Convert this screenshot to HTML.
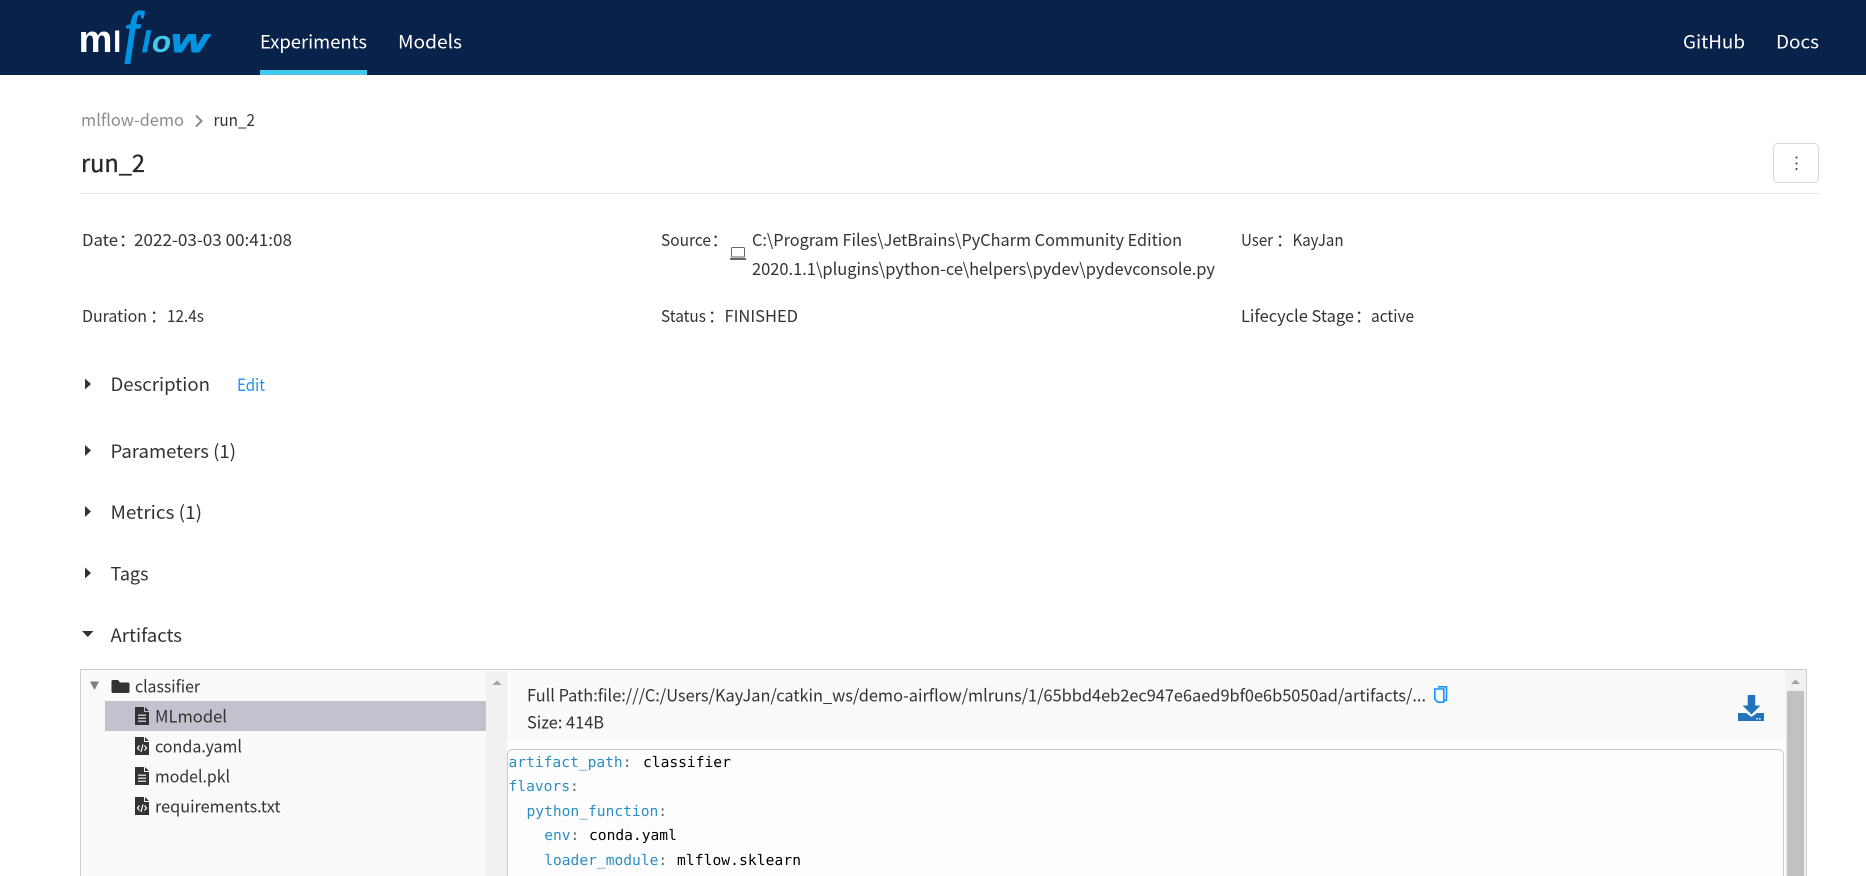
<!DOCTYPE html>
<html lang="en"><head><meta charset="utf-8"><title>run_2 - MLflow Run</title>
<style>
html,body{margin:0;padding:0;background:#fff;width:1866px;height:876px;overflow:hidden}
svg{display:block;position:absolute;left:0;top:0}
text{font-family:"Noto Sans CJK SC","Liberation Sans",sans-serif;fill:#333;white-space:pre}
.nav{font-size:18.5px;fill:#fff}
.m{font-size:16.6px}
.h{font-size:18.2px;fill:#333}
.t{font-size:16.8px;fill:#333}
.c{font-family:"DejaVu Sans Mono","Liberation Mono",monospace;font-size:14.6px;fill:#000;text-rendering:geometricPrecision}
.k{fill:#2b8fc4}.p{fill:#5a6b75}
.lg{font-family:"Liberation Sans",sans-serif}
</style></head><body>
<svg width="1866" height="876" viewBox="0 0 1866 876" xmlns="http://www.w3.org/2000/svg">
<!-- header -->
<rect width="1866" height="75" fill="#082249"/>
<rect x="260" y="70" width="107" height="5" fill="#43c9ed"/>
<text class="lg" x="78.500" y="52" font-size="38" font-weight="bold" style="fill:#fff" textLength="34" lengthAdjust="spacingAndGlyphs">m</text>
<text class="lg" x="113" y="52" font-size="30" font-weight="bold" style="fill:#fff">l</text>
<text x="125" y="51" font-size="56" style="font-family:'Liberation Serif',serif;font-style:italic;fill:#0194e2;stroke:#0194e2;stroke-width:2.200" textLength="13.400" lengthAdjust="spacingAndGlyphs">f</text>
<text class="lg" x="142" y="52" font-size="30" font-weight="bold" style="font-style:italic;fill:#0194e2;stroke:#0194e2;stroke-width:.8">l</text>
<text class="lg" x="152" y="52" font-size="31" font-weight="bold" style="font-style:italic;fill:#43c9ed" textLength="19" lengthAdjust="spacingAndGlyphs">o</text>
<text class="lg" x="171" y="52" font-size="33" font-weight="bold" style="font-style:italic;fill:#0194e2;stroke:#0194e2;stroke-width:.9" textLength="37" lengthAdjust="spacingAndGlyphs">w</text>
<text class="nav" x="260" y="48.500" textLength="107" lengthAdjust="spacingAndGlyphs">Experiments</text>
<text class="nav" x="398" y="48.500" textLength="64" lengthAdjust="spacingAndGlyphs">Models</text>
<text class="nav" x="1683" y="48.500" textLength="62" lengthAdjust="spacingAndGlyphs">GitHub</text>
<text class="nav" x="1776" y="48.500" textLength="43" lengthAdjust="spacingAndGlyphs">Docs</text>
<!-- breadcrumb -->
<text class="m" x="81" y="126" style="fill:#8c8c8c" textLength="103" lengthAdjust="spacingAndGlyphs">mlflow-demo</text>
<path d="M196 115.500l5.500 5.500-5.500 5.500" fill="none" stroke="#8c8c8c" stroke-width="2"/>
<text class="m" x="213.500" y="126" style="fill:#333" textLength="41.500" lengthAdjust="spacingAndGlyphs">run_2</text>
<text x="81" y="172" font-size="23.500" style="fill:#262626;stroke:#262626;stroke-width:.35" textLength="64" lengthAdjust="spacingAndGlyphs">run_2</text>
<rect x="1773.500" y="143.500" width="45" height="39" rx="4" fill="#fff" stroke="#d9d9d9"/>
<circle cx="1796.500" cy="157.500" r="1" fill="#333"/><circle cx="1796.500" cy="163.500" r="1" fill="#333"/><circle cx="1796.500" cy="169" r="1" fill="#333"/>
<rect x="80" y="193" width="1739" height="1" fill="#e4e4e4"/>
<!-- meta -->
<text class="m" x="82" y="246" textLength="36" lengthAdjust="spacingAndGlyphs">Date</text><text class="m" x="119" y="246">：</text>
<text class="m" x="134" y="246" textLength="158" lengthAdjust="spacingAndGlyphs">2022-03-03 00:41:08</text>
<text class="m" x="661" y="246" textLength="50" lengthAdjust="spacingAndGlyphs">Source</text><text class="m" x="711.500" y="246">：</text>
<rect x="731.500" y="247.500" width="13" height="9.500" rx="1" fill="none" stroke="#666"/><rect x="730" y="258" width="16" height="2" fill="#666"/>
<text class="m" x="752" y="246" textLength="430" lengthAdjust="spacingAndGlyphs">C:\Program Files\JetBrains\PyCharm Community Edition</text>
<text class="m" x="752" y="275" textLength="463" lengthAdjust="spacingAndGlyphs">2020.1.1\plugins\python-ce\helpers\pydev\pydevconsole.py</text>
<text class="m" x="1241" y="246" textLength="32" lengthAdjust="spacingAndGlyphs">User</text><text class="m" x="1276" y="246">：</text>
<text class="m" x="1292.500" y="246" textLength="51" lengthAdjust="spacingAndGlyphs">KayJan</text>
<text class="m" x="82" y="322" textLength="65" lengthAdjust="spacingAndGlyphs">Duration</text><text class="m" x="150" y="322">：</text>
<text class="m" x="167" y="322" textLength="37" lengthAdjust="spacingAndGlyphs">12.4s</text>
<text class="m" x="661" y="322" textLength="45" lengthAdjust="spacingAndGlyphs">Status</text><text class="m" x="708" y="322">：</text>
<text class="m" x="724.500" y="322" textLength="73.500" lengthAdjust="spacingAndGlyphs">FINISHED</text>
<text class="m" x="1241" y="322" textLength="113" lengthAdjust="spacingAndGlyphs">Lifecycle Stage</text><text class="m" x="1355" y="322">：</text>
<text class="m" x="1371" y="322" textLength="43" lengthAdjust="spacingAndGlyphs">active</text>
<!-- sections -->
<path d="M85 378.500l6 5.500-6 5.500z" fill="#333"/>
<text class="h" x="110.500" y="391" textLength="99.500" lengthAdjust="spacingAndGlyphs">Description</text>
<text class="t" x="237" y="391" style="fill:#1890ff" textLength="28" lengthAdjust="spacingAndGlyphs">Edit</text>
<path d="M85 445l6 5.500-6 5.500z" fill="#333"/>
<text class="h" x="110.500" y="458" textLength="125.500" lengthAdjust="spacingAndGlyphs">Parameters (1)</text>
<path d="M85 506l6 5.500-6 5.500z" fill="#333"/>
<text class="h" x="110.500" y="519" textLength="91.500" lengthAdjust="spacingAndGlyphs">Metrics (1)</text>
<path d="M85 567.500l6 5.500-6 5.500z" fill="#333"/>
<text class="h" x="110.500" y="580.500" textLength="38" lengthAdjust="spacingAndGlyphs">Tags</text>
<path d="M82 631h11.500l-5.750 6z" fill="#333"/>
<text class="h" x="110.500" y="642" textLength="71.500" lengthAdjust="spacingAndGlyphs">Artifacts</text>
<!-- artifact box -->
<rect x="80.500" y="669.500" width="1726" height="220" fill="#fff" stroke="#ccc"/>
<rect x="81" y="670" width="405" height="206" fill="#fafafa"/>
<rect x="486" y="671" width="21" height="205" fill="#f1f1f1"/>
<path d="M492.500 685l4.500-4.500 4.500 4.500z" fill="#a3a3a3"/>
<rect x="105" y="701" width="381" height="30" fill="#c4c0ce"/>
<path d="M90 681.500h9l-4.500 8.500z" fill="#808080"/>
<path d="M111.500 681.500a1.500 1.500 0 0 1 1.500-1.500h5l2 2.500h8a1.500 1.500 0 0 1 1.500 1.500v7.500a1.500 1.500 0 0 1-1.500 1.500h-15a1.500 1.500 0 0 1-1.500-1.500z" fill="#333"/>
<text class="t" x="135" y="692.700" textLength="65" lengthAdjust="spacingAndGlyphs">classifier</text>
<!-- file icons -->
<g fill="#333">
<path d="M135 707h9v5h5v13h-14z"/><path d="M145 707l4 4h-4z"/>
<path d="M135 737h9v5h5v13h-14z"/><path d="M145 737l4 4h-4z"/>
<path d="M135 767h9v5h5v13h-14z"/><path d="M145 767l4 4h-4z"/>
<path d="M135 797h9v5h5v13h-14z"/><path d="M145 797l4 4h-4z"/>
</g>
<g fill="#c4c0ce"><rect x="138" y="714.500" width="8" height="1.500"/><rect x="138" y="717.500" width="8" height="1.500"/><rect x="138" y="720.500" width="8" height="1.500"/></g>
<g fill="#c9c9c9"><rect x="138" y="774.500" width="8" height="1.500"/><rect x="138" y="777.500" width="8" height="1.500"/><rect x="138" y="780.500" width="8" height="1.500"/></g>
<g fill="none" stroke="#fff" stroke-width="1.200">
<path d="M139.500 745.500l-2 2.500 2 2.500M144.500 745.500l2 2.500-2 2.500M143 744.500l-2 7.500"/>
<path d="M139.500 805.500l-2 2.500 2 2.500M144.500 805.500l2 2.500-2 2.500M143 804.500l-2 7.500"/>
</g>
<text class="t" x="155" y="722.700" textLength="72" lengthAdjust="spacingAndGlyphs">MLmodel</text>
<text class="t" x="155" y="752.700" textLength="87" lengthAdjust="spacingAndGlyphs">conda.yaml</text>
<text class="t" x="155" y="782.700" textLength="75" lengthAdjust="spacingAndGlyphs">model.pkl</text>
<text class="t" x="155" y="812.700" textLength="125.500" lengthAdjust="spacingAndGlyphs">requirements.txt</text>
<!-- right pane -->
<rect x="507" y="670" width="1278" height="71" fill="#fafafa"/>
<text class="t" x="527" y="701.700" textLength="899" lengthAdjust="spacingAndGlyphs">Full Path:file:///C:/Users/KayJan/catkin_ws/demo-airflow/mlruns/1/65bbd4eb2ec947e6aed9bf0e6b5050ad/artifacts/...</text>
<text class="t" x="527" y="728.500" textLength="77" lengthAdjust="spacingAndGlyphs">Size: 414B</text>
<g fill="none" stroke="#1890ff" stroke-width="1.600"><path d="M1438 686.800h8.500v13.500h-2.500"/><path d="M1434.800 689h9v13.200h-6l-3-3z"/></g>
<g fill="#2374bb"><rect x="1747.700" y="695" width="7.500" height="11"/><path d="M1742.500 705.500h18l-9 9z"/><path d="M1738 713h8l5.500 4 5.500-4h7v8h-26z"/></g>
<rect x="1756.300" y="718" width="1.500" height="1.500" fill="#fff"/><rect x="1759" y="718" width="1.500" height="1.500" fill="#fff"/>
<rect x="507.500" y="749.500" width="1276" height="140" rx="5" fill="#fdfdfd" stroke="#ccc"/>
<text class="c" y="767"><tspan class="k" x="508.500">artifact_path</tspan><tspan class="p">:</tspan><tspan x="643">classifier</tspan></text>
<text class="c" y="791"><tspan class="k" x="508.500">flavors</tspan><tspan class="p">:</tspan></text>
<text class="c" y="816"><tspan class="k" x="526.500">python_function</tspan><tspan class="p">:</tspan></text>
<text class="c" y="840"><tspan class="k" x="544.200">env</tspan><tspan class="p">:</tspan><tspan x="589">conda.yaml</tspan></text>
<text class="c" y="865"><tspan class="k" x="544.200">loader_module</tspan><tspan class="p">:</tspan><tspan x="677" textLength="124">mlflow.sklearn</tspan></text>
<!-- right scrollbar -->
<rect x="1785" y="670" width="21" height="206" fill="#f1f1f1"/>
<rect x="1787" y="691" width="17" height="185" fill="#c1c1c1"/>
<path d="M1791 684l4.500-4.500 4.500 4.500z" fill="#a3a3a3"/>
</svg>
</body></html>
